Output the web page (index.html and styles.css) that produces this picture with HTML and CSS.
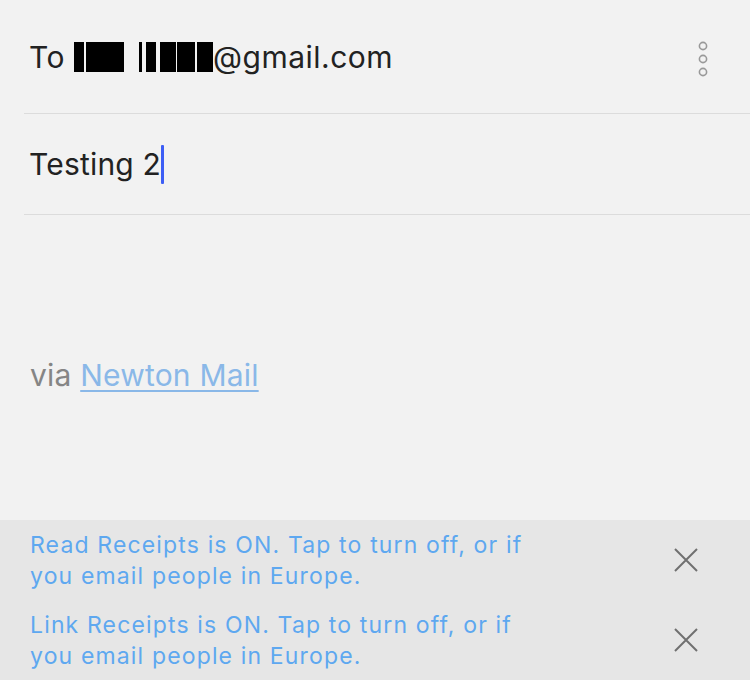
FILE: index.html
```html
<!DOCTYPE html>
<html>
<head>
<meta charset="utf-8">
<link rel="stylesheet" href="styles.css">
</head>
<body>
<div class="compose">
  <div class="row to-row">
    <div class="to-text">To <span class="redact"><span class="b b1"></span><span class="b b2"></span><span class="gap"></span><span class="b b3"></span><span class="b b4"></span><span class="b b5"></span><span class="b b6"></span><span class="b b7"></span></span>@gmail.com</div>
    <svg class="more" width="14" height="40" viewBox="0 0 14 40">
      <circle cx="7" cy="7" r="3.6" />
      <circle cx="7" cy="20" r="3.6" />
      <circle cx="7" cy="33" r="3.6" />
    </svg>
  </div>
  <div class="row subject-row">
    <div class="subject">Testing 2<span class="caret"></span></div>
  </div>
  <div class="body-area">
    <div class="sig">via <span class="link">Newton Mail</span></div>
  </div>
  <div class="banner">
    <div class="notice">
      <div class="notice-text">Read Receipts is ON. Tap to turn off, or if<br>you email people in Europe.</div>
      <svg class="close" width="26" height="26" viewBox="0 0 26 26"><path d="M2 2 L24 24 M24 2 L2 24"/></svg>
    </div>
    <div class="notice">
      <div class="notice-text">Link Receipts is ON. Tap to turn off, or if<br>you email people in Europe.</div>
      <svg class="close" width="26" height="26" viewBox="0 0 26 26"><path d="M2 2 L24 24 M24 2 L2 24"/></svg>
    </div>
  </div>
</div>
</body>
</html>
```
FILE: styles.css
```css
html, body {
  margin: 0;
  padding: 0;
  background: #f2f2f2;
}
body {
  width: 750px;
  height: 680px;
  overflow: hidden;
  font-family: "Inter", "Liberation Sans", sans-serif;
}
.compose {
  display: flex;
  flex-direction: column;
  height: 680px;
}
.row {
  margin-left: 24px;
  padding-left: 5px;
  border-bottom: 1px solid #dcdcdc;
  display: flex;
  align-items: center;
}
.to-row {
  height: 113px;
  justify-content: space-between;
  padding-right: 40px;
}
.to-text {
  font-size: 30px;
  color: #222;
  display: flex;
  align-items: center;
  letter-spacing: 0.5px;
}
.redact {
  display: inline-flex;
  align-items: center;
  margin-left: 9px;
  height: 30px;
}
.b {
  display: inline-block;
  height: 30px;
  background: #000;
}
.b1 { width: 10px; }
.b2 { width: 38px; margin-left: 2px; }
.gap { width: 15px; }
.b3 { width: 3px; }
.b4 { width: 10px; margin-left: 4px; }
.b5 { width: 16px; margin-left: 4px; }
.b6 { width: 18px; margin-left: 1px; }
.b7 { width: 16px; margin-left: 2px; }
.more circle {
  fill: none;
  stroke: #999;
  stroke-width: 1.6;
}
.more {
  margin-top: 5px;
}
.subject-row {
  height: 100px;
}
.subject {
  font-size: 30px;
  color: #222;
  display: flex;
  align-items: center;
  letter-spacing: 0.2px;
}
.caret {
  display: inline-block;
  width: 3px;
  height: 39px;
  background: #3d5ef5;
  margin-left: 0;
  border-radius: 1px;
}
.body-area {
  flex: 1;
  padding-left: 30px;
  padding-top: 142px;
}
.sig {
  font-size: 30px;
  color: #858585;
  letter-spacing: 0.2px;
}
.link {
  color: #8ab8e8;
  text-decoration: underline;
  text-decoration-thickness: 2px;
  text-underline-offset: 4px;
}
.banner {
  background: #e6e6e6;
  height: 160px;
  display: flex;
  flex-direction: column;
}
.notice {
  height: 80px;
  display: flex;
  align-items: center;
  justify-content: space-between;
  padding-left: 30px;
  padding-right: 51px;
}
.notice-text {
  font-family: "Inter", "Liberation Sans", sans-serif;
  font-size: 23px;
  letter-spacing: 1.15px;
  line-height: 31px;
  color: #5ea8f0;
  margin-top: 2px;
}
.close path {
  stroke: #707070;
  stroke-width: 2;
  fill: none;
}
```
